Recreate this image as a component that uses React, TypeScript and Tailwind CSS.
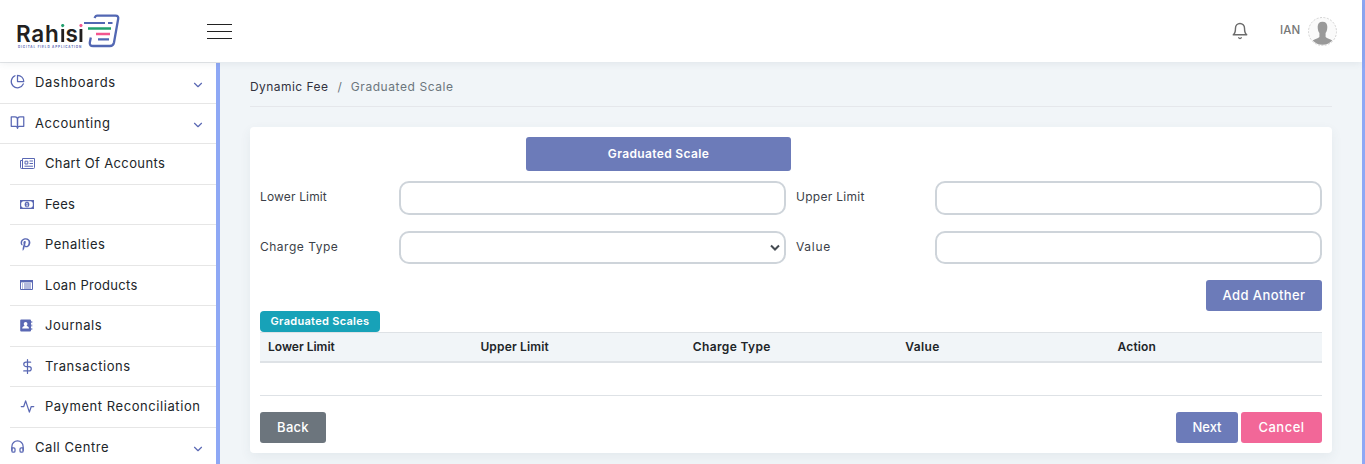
import React from "react";
import { FiPieChart, FiBookOpen, FiDollarSign, FiActivity, FiHeadphones, FiBell, FiChevronDown } from "react-icons/fi";
import { FaPinterestP } from "react-icons/fa";

type Item = { label: string; icon: React.ReactNode; sub?: boolean; tracking: string };

const NewsIcon = () => (
  <svg width="15" height="11" viewBox="0 0 15 11" fill="none" stroke="currentColor">
    <path d="M2.500 .5H14.500V9.500Q14.500 10.500 13.500 10.500H1.500Q.5 10.500 .5 9.500V2.500H2.500M2.500 .5V10" strokeWidth="1" />
    <path d="M5 3.200H7.800V6H5ZM9.500 3H13M9.500 5.500H13M4.500 8.200H13" strokeWidth="1" />
  </svg>
);
const MoneyIcon = () => (
  <svg width="14" height="9" viewBox="0 0 14 9" fill="none" stroke="currentColor">
    <path d="M.6 .6H13.400V8.400H.6Z" strokeWidth="1.200" />
    <path d="M1 1H2.500Q2.400 2.300 1 2.500ZM13 1H11.500Q11.600 2.300 13 2.500ZM1 8H2.500Q2.400 6.700 1 6.500ZM13 8H11.500Q11.600 6.700 13 6.500Z" fill="currentColor" strokeWidth=".2" />
    <ellipse cx="7" cy="4.500" rx="2.200" ry="2.700" fill="currentColor" strokeWidth=".3" />
    <path d="M6.300 3.500L7.100 3V6M6.200 6H8" stroke="white" strokeWidth=".7" />
  </svg>
);
const ListIcon = () => (
  <svg width="13" height="10" viewBox="0 0 13 10" fill="none" stroke="currentColor">
    <path d="M.5 .5H12.500V9.500H.5Z" />
    <path d="M0 1.200H13" strokeWidth="2.400" />
    <path d="M2 4H3M4 4H11M2 6H3M4 6H11M2 8H3M4 8H11" strokeWidth=".9" />
  </svg>
);
const BookIcon = () => (
  <svg width="13" height="13" viewBox="0 0 13 13">
    <path d="M1.200 .5H10Q11 .5 11 1.500V11.500Q11 12.500 10 12.500H1.200Q.2 12.500 .2 11.500V1.500Q.2 .5 1.200 .5ZM11.400 2H12.200V4H11.400ZM11.400 5.500H12.200V7.500H11.400ZM11.400 9H12.200V11H11.400Z" fill="currentColor" />
    <path d="M5.600 3C7 3 7.500 4 7.400 5C7.300 6 6.900 6.500 6.600 6.900C7.900 7.100 9 7.500 9 9.500H2.200C2.200 7.500 3.300 7.100 4.600 6.900C4.300 6.500 3.900 6 3.800 5C3.700 4 4.200 3 5.600 3Z" fill="white" />
  </svg>
);

const items: Item[] = [
  { label: "Dashboards", icon: <FiPieChart size={15} />, tracking: "tracking-[0.7px]" },
  { label: "Accounting", icon: <FiBookOpen size={15} />, tracking: "tracking-[0.55px]" },
  { label: "Chart Of Accounts", icon: <NewsIcon />, sub: true, tracking: "tracking-[0.37px]" },
  { label: "Fees", icon: <MoneyIcon />, sub: true, tracking: "tracking-[0.2px]" },
  { label: "Penalties", icon: <FaPinterestP size={13} className="-ml-px" />, sub: true, tracking: "tracking-[0.48px]" },
  { label: "Loan Products", icon: <ListIcon />, sub: true, tracking: "tracking-[0.3px]" },
  { label: "Journals", icon: <BookIcon />, sub: true, tracking: "tracking-[0.5px]" },
  { label: "Transactions", icon: <FiDollarSign size={15} />, sub: true, tracking: "tracking-[0.58px]" },
  { label: "Payment Reconciliation", icon: <FiActivity size={15} />, sub: true, tracking: "tracking-[0.57px]" },
  { label: "Call Centre", icon: <FiHeadphones size={15} />, tracking: "tracking-[0.55px]" },
];

function Logo() {
  return (
    <div className="relative h-[34px] w-[103px]">
      <span className="absolute left-[-1px] top-[10px] flex text-[22.500px] font-semibold leading-[20px] text-[#231f20]">
        <span className="tracking-[0.8px]">Rah</span>
        <span className="bg-[linear-gradient(#22a06f_5.200px,#231f20_5.200px)] bg-clip-text text-transparent">i</span>
        <span>s</span>
        <span className="bg-[linear-gradient(#f4568f_5.200px,#231f20_5.200px)] bg-clip-text text-transparent">i</span>
      </span>
      <span className="absolute left-[1px] top-[31px] whitespace-nowrap text-[3px] font-bold leading-[4px] tracking-[0.9px] text-[#5b6bb5]">DIGITAL FIELD APPLICATION</span>
      <svg className="absolute inset-0" width="103" height="34" viewBox="0 0 103 34" fill="none">
        <path d="M77.500 4L78.200 2.800Q78.800 1.700 80 1.700H98.500Q101.800 1.700 101.200 4.700L97 28.500Q96.300 32 93 32H76Q72.300 32 72.800 28.500L73.800 23.500" stroke="#5267b3" strokeWidth="2.300" />
        <path d="M67 9H88M91 9H95.500M81 25.300H92" stroke="#5267b3" strokeWidth="2.200" />
        <path d="M71 14.500H94" stroke="#22a06f" strokeWidth="2.500" />
        <path d="M79 20H93" stroke="#f4568f" strokeWidth="2.500" />
      </svg>
    </div>
  );
}

function Header() {
  return (
    <header className="relative z-10 flex h-[62px] w-[1362px] shrink-0 items-center bg-white shadow-[0_1px_8px_rgba(60,80,100,0.1)]">
      <div className="w-[207px] pl-[17px]"><Logo /></div>
      <div className="flex w-[25px] flex-col gap-[6px]">
        <i className="h-px bg-[#222]" /><i className="h-px bg-[#222]" /><i className="h-px bg-[#222]" />
      </div>
      <div className="ml-auto flex items-center pr-[25px]">
        <FiBell size={18} strokeWidth={1.9} className="text-[#6b6b6b]" />
        <span className="ml-[31px] w-[28px] text-[11.500px] font-medium tracking-[0.1px] text-[#777]">IAN</span>
        <svg width="29" height="29" viewBox="0 0 29 29">
          <circle cx="14.500" cy="14.500" r="14" fill="#fafafa" stroke="#d2d2d2" strokeDasharray="2 1.500" />
          <path d="M14.500 4.700c3.300 0 5 2 4.800 5.600 0 2.700-.8 4.500-1.700 5.700v4c1.500 1.500 4.500 2 6.700 3.600a13.500 13.500 0 0 1-19.600 0c2.200-1.600 5.200-2.100 6.700-3.600v-4c-.9-1.200-1.700-3-1.700-5.700-.2-3.600 1.500-5.600 4.800-5.600z" fill="#999" />
        </svg>
      </div>
    </header>
  );
}

function Sidebar() {
  return (
    <aside className="flex w-[220px] shrink-0 border-t border-[#e6e8ea] bg-white">
      <nav className="w-[216px]">
        {items.map((it) => (
          <div key={it.label} className={it.sub ? "pl-[10px]" : ""}>
            <div className="flex h-[40.500px] items-center border-b border-[#e6e6e6] pl-[10px] text-[13px] text-[#212529]">
              <span className={"flex w-[25px] shrink-0 text-[#5a68b4] " + (it.sub ? "" : "pb-[2px]")}>{it.icon}</span>
              <span className={"whitespace-nowrap " + it.tracking}>{it.label}</span>
              {!it.sub && <FiChevronDown size={14} className="ml-auto mr-[11px] mt-[4px] text-[#5a68b4]" />}
            </div>
          </div>
        ))}
      </nav>
      <div className="w-1 bg-[#8ea8f5]" />
    </aside>
  );
}

const inputCls = "flex h-full w-[387px] items-center justify-end rounded-[10px] border-2 border-[#ced4da] bg-white ";
const btnCls = "flex h-[31px] items-center justify-center rounded-[3px] text-[13px] font-medium text-white ";

function Field({ label, select, left, tracking }: { label: string; select?: boolean; left?: boolean; tracking: string }) {
  return (
    <div className="flex h-full">
      <label className={"w-[139px] shrink-0 text-[12px] leading-[31px] text-[#3c3f49] " + tracking}>{label}</label>
      <div className={inputCls + (left ? "mr-[10px]" : "")}>
        {select && (
          <svg className="mr-[4px]" width="10" height="8" viewBox="0 0 10 8" fill="none"><path d="M1 1.500L5 5.500L9 1.500" stroke="#454b52" strokeWidth="2" /></svg>
        )}
      </div>
    </div>
  );
}

const columns = [
  { name: "Lower Limit", tracking: "" },
  { name: "Upper Limit", tracking: "tracking-[0.15px]" },
  { name: "Charge Type", tracking: "tracking-[0.35px]" },
  { name: "Value", tracking: "tracking-[0.4px]" },
  { name: "Action", tracking: "tracking-[0.15px]" },
];

export default function App() {
  return (
    <div className="flex h-[464px] w-[1365px] overflow-hidden bg-[#f1f5f8] font-[Inter,sans-serif]">
      <div className="flex w-[1362px] flex-col">
        <Header />
        <div className="flex h-[402px] overflow-hidden">
          <Sidebar />
          <main className="w-[1142px] px-[30px]">
            <div className="flex h-[45px] items-center border-b border-[#e5e7eb] pt-[5px] text-[12px]">
              <span className="tracking-[0.45px] text-[#32323f]">Dynamic Fee</span>
              <span className="mx-[9px] text-[#6c757d]">/</span>
              <span className="tracking-[0.57px] text-[#6c757d]">Graduated Scale</span>
            </div>
            <section className="mt-[20px] h-[326px] rounded-[4px] bg-white p-[10px] shadow-[0_4px_12px_rgba(60,80,100,0.07)]">
              <div className="ml-[266px] flex h-[34px] w-[265px] items-center justify-center rounded-[3px] bg-[#6c7bb9] text-[12px] font-semibold tracking-[0.35px] text-white">Graduated Scale</div>
              <div className="mt-[10px] flex h-[34px]">
                <Field label="Lower Limit" left tracking="tracking-[0.15px]" /><Field label="Upper Limit" tracking="tracking-[0.28px]" />
              </div>
              <div className="mt-[16px] flex h-[33px]">
                <Field label="Charge Type" select left tracking="tracking-[0.5px]" /><Field label="Value" tracking="tracking-[0.7px]" />
              </div>
              <div className="mt-[16px] flex justify-end"><button className={btnCls + "w-[116px] bg-[#6c7bb9] tracking-[0.4px]"}>Add Another</button></div>
              <div className="flex h-[21px] w-[120px] items-center justify-center rounded-[4px] bg-[#17a2b8] text-[11px] font-semibold tracking-[0.3px] text-white">Graduated Scales</div>
              <div className="grid h-[31px] grid-cols-5 items-center border-b-2 border-t border-[#dee2e6] bg-[#f1f5f8] text-[12px] font-semibold text-[#212529]">
                {columns.map((c) => <span key={c.name} className={"pl-2 " + c.tracking}>{c.name}</span>)}
              </div>
              <div className="h-[33px] border-b border-[#dee2e6]" />
              <div className="mt-[16px] flex">
                <button className={btnCls + "w-[66px] bg-[#6c757d] tracking-[0.3px]"}>Back</button>
                <button className={btnCls + "ml-auto w-[62px] bg-[#6c7bb9]"}>Next</button>
                <button className={btnCls + "ml-[3px] w-[81px] bg-[#f26798] tracking-[0.5px]"}>Cancel</button>
              </div>
            </section>
          </main>
        </div>
      </div>
      <div className="w-[3px] bg-[#8ea8f5]" />
    </div>
  );
}
